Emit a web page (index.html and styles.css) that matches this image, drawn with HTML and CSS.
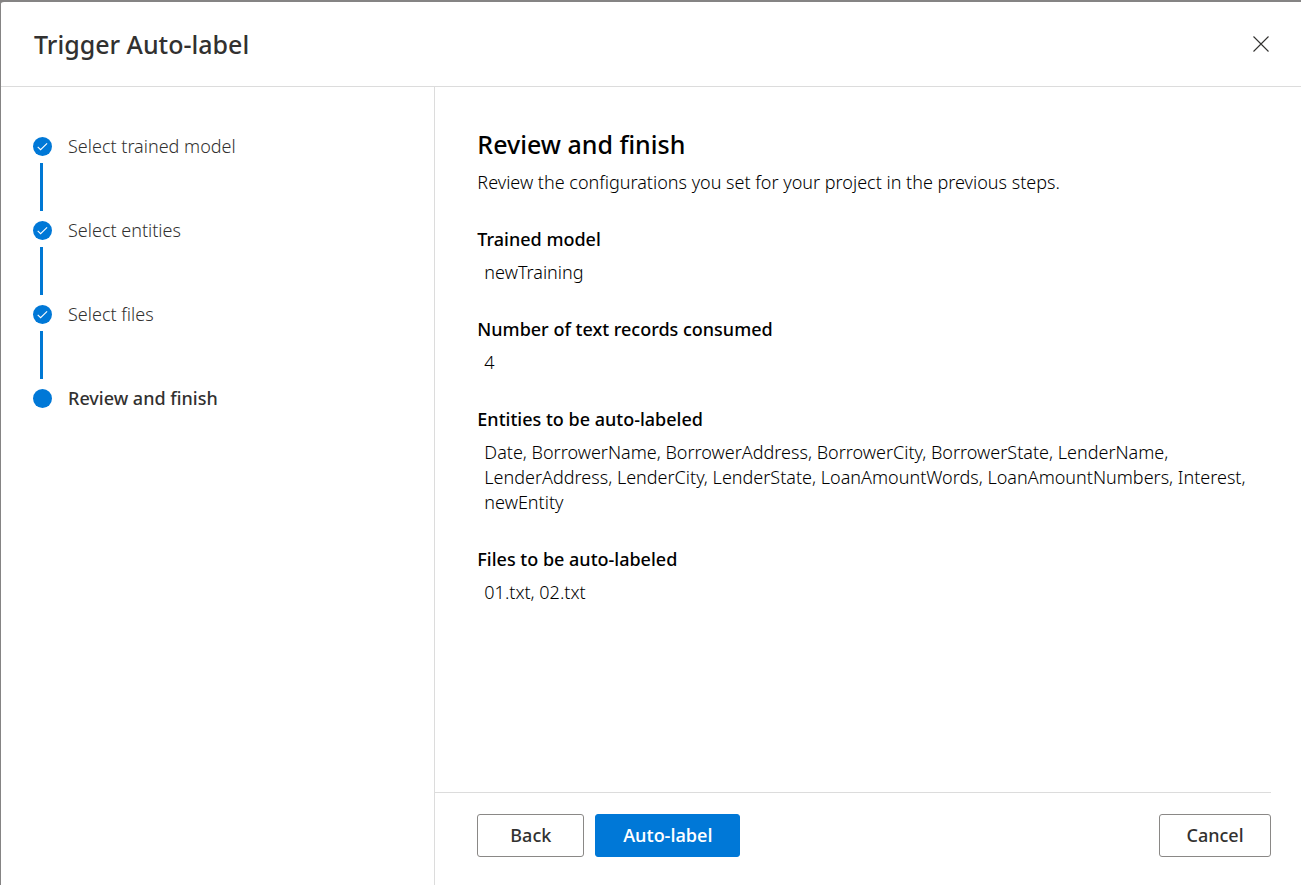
FILE: index.html
```html
<!DOCTYPE html>
<html lang="en">
<head>
<meta charset="utf-8">
<title>Trigger Auto-label</title>
<link rel="stylesheet" href="styles.css">
</head>
<body>
<div class="dialog" role="dialog" aria-labelledby="dialog-title">
  <header class="dialog-header">
    <h1 class="dialog-title" id="dialog-title">Trigger Auto-label</h1>
    <button class="close-button" type="button" aria-label="Close">
      <svg width="18" height="18" viewBox="0 0 18 18" fill="none" stroke="#323130" stroke-width="1.1" aria-hidden="true"><path d="M1.5 1.5l15 15M16.5 1.5l-15 15"/></svg>
    </button>
  </header>
  <div class="dialog-body">
    <nav class="sidebar" aria-label="Wizard steps">
      <ol class="steps">
        <li class="step"><span class="step-dot"><svg width="19" height="19" viewBox="0 0 19 19" fill="none" stroke="#fff" stroke-width="1.1" aria-hidden="true"><path d="M4.7 9.8l2.9 2.9 6.5-6.4"/></svg></span><span class="step-label">Select trained model</span></li>
        <li class="step"><span class="step-dot"><svg width="19" height="19" viewBox="0 0 19 19" fill="none" stroke="#fff" stroke-width="1.1" aria-hidden="true"><path d="M4.7 9.8l2.9 2.9 6.5-6.4"/></svg></span><span class="step-label">Select entities</span></li>
        <li class="step"><span class="step-dot"><svg width="19" height="19" viewBox="0 0 19 19" fill="none" stroke="#fff" stroke-width="1.1" aria-hidden="true"><path d="M4.7 9.8l2.9 2.9 6.5-6.4"/></svg></span><span class="step-label">Select files</span></li>
        <li class="step step-current" aria-current="step"><span class="step-dot"></span><span class="step-label">Review and finish</span></li>
      </ol>
    </nav>
    <div class="main">
      <main class="content">
        <h2 class="content-title">Review and finish</h2>
        <p class="content-intro">Review the configurations you set for your project in the previous steps.</p>
        <section class="summary">
          <h3 class="summary-title">Trained model</h3>
          <p class="summary-value">newTraining</p>
        </section>
        <section class="summary">
          <h3 class="summary-title">Number of text records consumed</h3>
          <p class="summary-value">4</p>
        </section>
        <section class="summary">
          <h3 class="summary-title">Entities to be auto-labeled</h3>
          <p class="summary-value">Date, BorrowerName, BorrowerAddress, BorrowerCity, BorrowerState, LenderName, LenderAddress, LenderCity, LenderState, LoanAmountWords, LoanAmountNumbers, Interest, newEntity</p>
        </section>
        <section class="summary">
          <h3 class="summary-title">Files to be auto-labeled</h3>
          <p class="summary-value">01.txt, 02.txt</p>
        </section>
      </main>
      <footer class="actions">
        <button class="button button-back" type="button">Back</button>
        <button class="button button-primary" type="button">Auto-label</button>
        <button class="button button-cancel" type="button">Cancel</button>
      </footer>
    </div>
  </div>
</div>
</body>
</html>
```
FILE: styles.css
```css
*, *::before, *::after { box-sizing: border-box; }

body {
  margin: 0;
  background: #858484;
  color: #000;
  font: 300 18px/25px "Noto Sans", "Open Sans", sans-serif;
}

h1, h2, h3, p, ol { margin: 0; padding: 0; }

.dialog {
  display: flex;
  flex-direction: column;
  min-height: 100vh;
  border-top: 2px solid #858484;
  border-left: 1px solid #858484;
  border-radius: 4px 0 0 0;
  background: #fff;
}

.dialog-header {
  display: flex;
  align-items: center;
  justify-content: space-between;
  height: 85px;
  padding: 0 24px 0 33px;
  border-bottom: 1px solid #dcdcdc;
}

.dialog-title {
  color: #323130;
  font-size: 25px;
  font-weight: 500;
  line-height: 36px;
}

.close-button {
  display: flex;
  align-items: center;
  justify-content: center;
  width: 32px;
  height: 32px;
  padding: 0;
  border: 0;
  background: none;
}

.dialog-body {
  display: grid;
  flex: 1;
  grid-template-columns: 1fr 2fr;
}

.sidebar {
  padding: 47px 32px;
  color: #323130;
}

.steps { list-style: none; }

.step {
  display: grid;
  grid-template-columns: 19px 1fr;
  column-gap: 16px;
  align-items: center;
}

.step:not(:last-child)::after {
  content: "";
  width: 3px;
  height: 48px;
  margin: 4px 0 7px 7px;
  background: #0078d4;
}

.step-dot {
  width: 19px;
  height: 19px;
  border-radius: 50%;
  background: #0078d7;
}

.step-dot svg { display: block; }

.step-current { font-weight: 500; }

.main {
  display: flex;
  flex-direction: column;
  padding-right: 30px;
  border-left: 1px solid #dcdcdc;
}

.content {
  flex: 1;
  padding: 39px 0 32px 42px;
}

.content-title {
  margin-bottom: 8px;
  font-size: 25px;
  font-weight: 500;
  line-height: 36px;
}

.summary { margin-top: 32px; }

.summary-title {
  margin-bottom: 8px;
  font-size: 18px;
  font-weight: 500;
}

.summary-value { padding-left: 7px; }

.actions {
  display: flex;
  gap: 11px;
  padding: 21px 0 28px 42px;
  border-top: 1px solid #dcdcdc;
}

.button {
  height: 43px;
  padding: 0;
  border: 1px solid #8a8886;
  border-radius: 3px;
  background: #fff;
  color: #323130;
  font: inherit;
  font-weight: 500;
}

.button-back { width: 107px; }

.button-primary {
  width: 145px;
  border-color: #0078d7;
  background: #0078d7;
  color: #fff;
  font-family: "Open Sans", "Noto Sans", sans-serif;
  font-weight: 600;
}

.button-cancel {
  width: 112px;
  margin-left: auto;
}
```
